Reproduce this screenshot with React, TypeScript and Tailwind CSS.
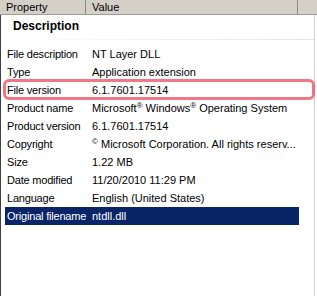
import React from "react";

const rows: [string, React.ReactNode][] = [
  ["File description", "NT Layer DLL"],
  ["Type", "Application extension"],
  ["File version", "6.1.7601.17514"],
  ["Product name", <>Microsoft<sup className="text-[8px]">®</sup> Windows<sup className="text-[8px]">®</sup> Operating System</>],
  ["Product version", "6.1.7601.17514"],
  ["Copyright", <><sup className="text-[8px]">©</sup> Microsoft Corporation. All rights reserv...</>],
  ["Size", "1.22 MB"],
  ["Date modified", "11/20/2010 11:29 PM"],
  ["Language", "English (United States)"],
];

export default function App() {
  return (
    <div
      className="relative w-[317px] h-[296px] bg-white overflow-hidden flex flex-col text-[11px] text-black"
      style={{ fontFamily: '"Liberation Sans", Arial, sans-serif' }}
    >
      <div className="flex h-[15px] shrink-0 bg-[#d4d0c8] border-b border-[#a09d96] leading-[14px]">
        <div className="w-[86px] shrink-0 pl-[6px] border-r border-[#8c8a85]">Property</div>
        <div className="w-[212px] shrink-0 pl-[6px] border-r border-[#8c8a85]">Value</div>
        <div className="flex-1" />
      </div>
      <div className="flex flex-1 border-l border-[#404040]">
        <div className="flex-1 flex flex-col">
          <div className="h-[30px] flex flex-col">
            <div className="pl-[12px] pt-[4px] font-bold text-[12px] leading-[15px]">Description</div>
            <div className="mt-[5px] h-px bg-gradient-to-r from-white to-[#dfe6f0]" />
          </div>
          {rows.map(([k, v]) => (
            <div key={k} className="flex h-[18px] items-center leading-[18px]">
              <div className="w-[85px] shrink-0 pl-[6px] whitespace-nowrap tracking-[-0.2px]">{k}</div>
              <div className="pl-[6px] whitespace-nowrap">{v}</div>
            </div>
          ))}
          <div className="flex h-[18px] items-center leading-[18px] ml-[4px] w-[294px] bg-[#0a2468] text-white">
            <div className="w-[81px] shrink-0 pl-[2px] whitespace-nowrap tracking-[-0.2px]">Original filename</div>
            <div className="pl-[6px] whitespace-nowrap">ntdll.dll</div>
          </div>
        </div>
        <div className="w-[3px] border-l border-[#d4d0c8]" />
      </div>
      <div className="absolute left-[3px] top-[79px] w-[312px] h-[21px] rounded-[6px] border-[3px] border-[#ec4a5e]/75" />
    </div>
  );
}
